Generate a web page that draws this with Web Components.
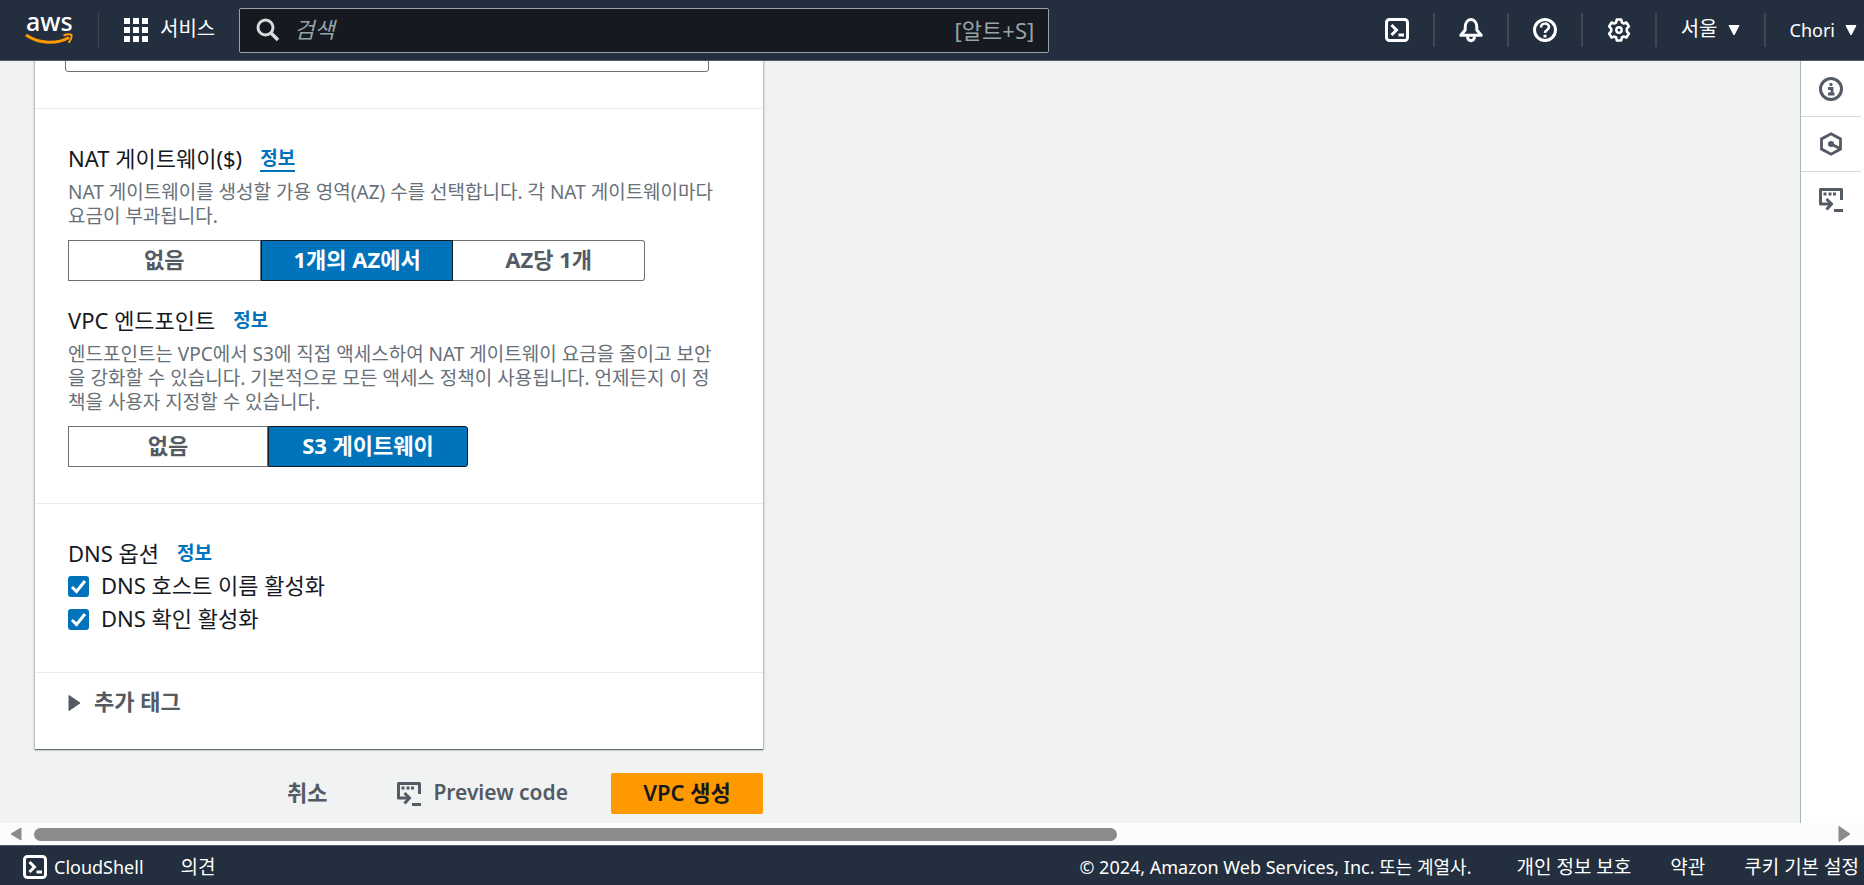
<!DOCTYPE html>
<html lang="ko">
<head>
<meta charset="utf-8">
<title>VPC 생성</title>
<style>
  body {
    margin: 0;
    font-family: 'Noto Sans', 'Noto Sans CJK KR', sans-serif;
    font-size: 22px;
    line-height: 24px;
    color: #16191f;
    background: #f1f3f3;
  }
</style>
</head>
<body>
<vpc-app></vpc-app>

<script>
const BASE = `
  * { box-sizing: border-box; }
  button, input { font: inherit; color: inherit; margin: 0; }
  button { background: none; border: 0; padding: 0; cursor: pointer; }
  a { color: inherit; text-decoration: none; }
`;

const ICONS = {
  shell: '<rect x="1.5" y="1.5" width="21" height="21" rx="3"/><path d="M6.500 7l5 5-5 5M13.500 17h5.500"/>',
  bell: '<path d="M1.800 17.300h20.400L17.800 12V9.500C17.800 5 15.500 1.500 12 1.500S6.200 5 6.200 9.500V12z" stroke-linejoin="round"/><path d="M8.500 18.500c0 5.500 7 5.500 7 0"/>',
  help: '<circle cx="12" cy="12" r="10.500"/><path d="M8 9.500c0-5.200 8-5 8-.4 0 2.900-4 2.700-4 6" stroke-width="2.500"/><path d="M12 16.800v2.700"/>',
  gear: '<path d="M9.800 1.500h4.400l.7 3 1.600.9 2.900-.9 2.500 3.900-2.100 2.300v2.600l2.100 2.300-2.500 3.900-2.900-.9-1.600.9-.7 3H9.800l-.7-3-1.600-.9-2.900.9-2.500-3.900 2.100-2.300v-2.600L2.100 8.400l2.500-3.900 2.900.9 1.600-.9z" stroke-linejoin="round" stroke-width="2.600"/><circle cx="12" cy="12" r="2.700" stroke-width="2.400"/>',
  info: '<circle cx="12" cy="12" r="10.500"/><path d="M12 6v3M9 11.500h4v5.500M9 17h6.500" stroke-width="2.800"/>',
  hexagon: '<path d="M12 1.800l9.500 5.100v10.200L12 22.200l-9.500-5.100V6.900z" stroke-width="2.800"/><circle cx="12" cy="12" r="3" fill="currentColor" stroke="none"/><path d="M12 12l9 4.500"/>',
  code: '<path d="M22.500 12V1.500h-21v14.500h10" stroke-linejoin="round"/><path d="M7.500 11l5 5-5 5.500M15 22.500h9"/><path d="M4.500 6h3M9.500 6h3M14 6h3" stroke-width="3"/>',
  search: '<circle cx="9.500" cy="9.500" r="7.500"/><path d="M15 15l7 7" stroke-width="3.500"/>',
  grid: '<path stroke="none" fill="currentColor" d="M0 0h6v6H0zM9 0h6v6H9zM18 0h6v6h-6zM0 9h6v6H0zM9 9h6v6H9zM18 9h6v6h-6zM0 18h6v6H0zM9 18h6v6H9zM18 18h6v6h-6z"/>',
  down: '<path d="M1 1.500h10L6 11z" fill="currentColor" stroke-width="1" stroke-linejoin="round"/>',
  right: '<path d="M1 .500v15l11-7.500z" fill="currentColor" stroke-width="1" stroke-linejoin="round"/>',
  left: '<path d="M11 1v12L1 7z" fill="currentColor" stroke-width="1" stroke-linejoin="round"/>',
};

function define(name, css, html) {
  customElements.define(name, class extends HTMLElement {
    constructor() {
      super();
      this.attachShadow({ mode: 'open' });
    }

    connectedCallback() {
      const markup = typeof html === 'function' ? html(this) : html;
      this.shadowRoot.innerHTML = `<style>${BASE}${css}</style>${markup}`;
    }
  });
}

define('ui-icon', `
  :host { display: block; flex: none; }
  svg { display: block; fill: none; stroke: currentColor; stroke-width: 3; overflow: visible; }
`, (el) => {
  const w = el.getAttribute('width') || 24;
  const h = el.getAttribute('height') || w;
  return `<svg width="${w}" height="${h}" viewBox="0 0 ${w} ${h}" aria-hidden="true">${ICONS[el.getAttribute('name')]}</svg>`;
});

define('aws-logo', `
  :host { display: block; }
  svg { display: block; overflow: visible; }
  text { font: 500 25px 'Noto Sans', sans-serif; fill: #fff; }
`, `
  <svg width="50" height="54" viewBox="0 -10 50 54" role="img" aria-label="aws">
    <text x="1" y="18">aws</text>
    <path d="M1 22c13 9 31 9.500 43 2.500" fill="none" stroke="#f90" stroke-width="3"/>
    <path d="M38.500 22.500c3-1.500 6-1.500 8-.8.300 3-1 6-3 8" fill="none" stroke="#f90" stroke-width="2"/>
  </svg>
`);

define('top-nav', `
  :host {
    display: flex;
    align-items: center;
    height: 61px;
    flex: none;
    background: #232f3e;
    border-bottom: 1px solid #545b64;
    color: #fff;
    font-size: 20px;
  }
  a, button { display: flex; align-items: center; }
  .logo { padding: 0 23px 0 25px; }
  .line { width: 2px; height: 34px; background: #414750; }
  .line.thin { width: 1px; }
  .services { gap: 12px; padding: 0 24px 0 25px; white-space: nowrap; }
  .services span { padding-bottom: 2px; }
  .search {
    display: flex;
    align-items: center;
    width: 810px;
    height: 45px;
    padding: 0 14px 0 16px;
    border: 1px solid #95a5a6;
    border-radius: 2px;
    background: #16191f;
    color: #d5dbdb;
    font-size: 22px;
  }
  .search input {
    flex: 1;
    min-width: 0;
    margin-left: 14px;
    padding: 0 0 2px;
    border: 0;
    background: none;
  }
  .search input::placeholder { color: #95a5a6; font-style: italic; opacity: 1; }
  .search span { color: #95a5a6; }
  .tools { display: flex; align-items: center; margin-left: auto; }
  .tools button { gap: 10px; padding: 0 24px; white-space: nowrap; }
  .tools button span { padding-bottom: 2px; }
  .tools button.user { padding-right: 7px; font-size: 18px; }
`, `
  <a class="logo" href="#" aria-label="AWS"><aws-logo></aws-logo></a>
  <div class="line thin"></div>
  <button class="services"><ui-icon name="grid"></ui-icon><span>서비스</span></button>
  <label class="search">
    <ui-icon name="search"></ui-icon>
    <input type="search" placeholder="검색" aria-label="검색">
    <span>[알트+S]</span>
  </label>
  <div class="tools">
    <button aria-label="CloudShell"><ui-icon name="shell"></ui-icon></button>
    <div class="line"></div>
    <button aria-label="알림"><ui-icon name="bell"></ui-icon></button>
    <div class="line"></div>
    <button aria-label="지원"><ui-icon name="help"></ui-icon></button>
    <div class="line"></div>
    <button aria-label="설정"><ui-icon name="gear"></ui-icon></button>
    <div class="line"></div>
    <button><span>서울</span><ui-icon name="down" width="12"></ui-icon></button>
    <div class="line"></div>
    <button class="user">Chori<ui-icon name="down" width="12"></ui-icon></button>
  </div>
`);

define('form-field', `
  :host { display: block; }
  .head { display: flex; align-items: center; gap: 18px; }
  .head span { padding-bottom: 2px; }
  .head a { color: #0073bb; font-size: 19px; font-weight: 700; border-bottom: 2px solid transparent; }
  :host([active]) .head a { border-color: #0073bb; }
  :host([plain]) .head { margin-bottom: 3px; }
  p { margin: 8px 0 12px; color: #687078; font-size: 19px; white-space: nowrap; }
`, (el) => `
  <div class="head"><span>${el.getAttribute('label')}</span><a href="#">정보</a></div>
  ${el.hasAttribute('plain') ? '' : '<p><slot name="description"></slot></p>'}
  <slot></slot>
`);

define('segmented-control', `
  :host { display: flex; width: var(--segments-width); }
  button {
    flex: 1;
    height: 41px;
    padding-bottom: 4px;
    border: 1px solid #687078;
    background: #fff;
    color: #545b64;
    font-weight: 700;
    white-space: nowrap;
  }
  button + button { border-left: 0; }
  button:first-child { border-radius: 3px 0 0 3px; border-right: 0; }
  button:last-child { border-radius: 0 3px 3px 0; }
  button.selected, button.selected:last-child { background: #0073bb; border: 1px solid #16191f; color: #fff; }
`, (el) => {
  const selected = Number(el.getAttribute('selected'));
  return el.getAttribute('options').split('|').map((text, i) =>
    `<button aria-pressed="${i === selected}"${i === selected ? ' class="selected"' : ''}>${text}</button>`
  ).join('');
});

define('check-field', `
  :host { display: block; }
  label { display: flex; align-items: center; gap: 12px; height: 33px; }
  span { padding-bottom: 4px; }
  input {
    appearance: none;
    width: 21px;
    height: 21px;
    border-radius: 3px;
    background: #fff;
    border: 1px solid #687078;
  }
  input:checked {
    border: 0;
    background: #0073bb url("data:image/svg+xml,%3Csvg xmlns='http://www.w3.org/2000/svg' viewBox='0 0 21 21'%3E%3Cpath d='M4 11l4.500 4.500L17 5' fill='none' stroke='white' stroke-width='3'/%3E%3C/svg%3E");
  }
`, `<label><input type="checkbox" checked><span><slot></slot></span></label>`);

define('form-card', `
  :host {
    display: block;
    background: #fff;
    box-shadow: 0 1px 1px 0 #687078, 0 0 2px 1px #b8c1c1;
  }
`, '<slot></slot>');

define('form-section', `
  :host { display: flex; flex-direction: column; gap: 27px; padding: 37px 33px 36px; border-bottom: 1px solid #eaeded; }
  :host([kind="input"]) { padding: 30px 54px 36px 30px; }
  :host([kind="tags"]) { padding: 18px 33px 34px; border-bottom: 0; }
  ::slotted(input) {
    width: 100%;
    height: 42px;
    border: 1px solid #687078;
    border-radius: 3px;
  }
`, '<slot></slot>');

define('expand-toggle', `
  :host { display: block; }
  button { display: flex; align-items: center; gap: 12px; height: 24px; color: #545b64; font-weight: 600; }
  span { padding-bottom: 4px; }
`, '<button aria-expanded="false"><ui-icon name="right" width="14" height="16"></ui-icon><span><slot></slot></span></button>');

define('form-actions', `
  :host { display: flex; justify-content: flex-end; font-weight: 600; color: #545b64; }
  button { display: flex; align-items: center; gap: 12px; height: 41px; white-space: nowrap; }
  span { padding-bottom: 4px; }
  .cancel { padding-right: 35px; }
  .preview { padding: 0 43px 0 35px; font-size: 21px; }
  .create { justify-content: center; width: 152px; border-radius: 2px; background: #f90; color: #16191f; }
`, `
  <button class="cancel"><span>취소</span></button>
  <button class="preview"><ui-icon name="code"></ui-icon><span>Preview code</span></button>
  <button class="create"><span>VPC 생성</span></button>
`);

define('side-rail', `
  :host {
    display: flex;
    flex-direction: column;
    flex: none;
    width: 64px;
    padding: 1px 3px 0 0;
    background: #fff;
    border-left: 1px solid #aab7b8;
    color: #545b64;
  }
  button { display: grid; place-items: center; height: 55px; border-bottom: 1px solid #d5dbdb; }
  button:last-child { border-bottom: 0; }
`, `
  <button aria-label="정보"><ui-icon name="info"></ui-icon></button>
  <button aria-label="자습서"><ui-icon name="hexagon"></ui-icon></button>
  <button aria-label="코드"><ui-icon name="code"></ui-icon></button>
`);

define('h-scrollbar', `
  :host {
    display: flex;
    align-items: center;
    flex: none;
    gap: 12px;
    height: 22px;
    padding: 0 14px 0 10px;
    background: #fcfcfc;
    color: #8b8b8b;
  }
  .track { flex: 1; }
  .thumb { width: calc(60% + 8px); height: 13px; border-radius: 7px; background: #8b8b8b; }
`, `
  <ui-icon name="left" width="12" height="14"></ui-icon>
  <div class="track"><div class="thumb"></div></div>
  <ui-icon name="right" width="12" height="16"></ui-icon>
`);

define('page-footer', `
  :host {
    display: flex;
    align-items: center;
    flex: none;
    height: 40px;
    padding: 2px 5px 0 23px;
    border-top: 1px solid #545b64;
    background: #232f3e;
    color: #fff;
    font-size: 19px;
    white-space: nowrap;
  }
  button { display: flex; align-items: center; gap: 7px; font-size: 18px; }
  .feedback { margin-left: 37px; }
  .legal { display: flex; gap: 39px; margin-left: auto; }
  .legal span { margin-right: 6px; font-size: 18px; }
`, `
  <button><ui-icon name="shell"></ui-icon>CloudShell</button>
  <a class="feedback" href="#">의견</a>
  <div class="legal">
    <span>© 2024, Amazon Web Services, Inc. 또는 계열사.</span>
    <a href="#">개인 정보 보호</a>
    <a href="#">약관</a>
    <a href="#">쿠키 기본 설정</a>
  </div>
`);

define('vpc-app', `
  :host { display: flex; flex-direction: column; height: 100vh; }
  .body { display: flex; flex: 1; min-height: 0; }
  /* the form is shown scrolled to its end */
  main {
    display: flex;
    flex-direction: column;
    justify-content: flex-end;
    flex: 1;
    min-width: 0;
    overflow: hidden;
    padding: 0 0 9px 35px;
  }
  .form { display: flex; flex-direction: column; gap: 24px; width: 728px; }
  .nat { --segments-width: 577px; }
  .endpoint { --segments-width: 400px; }
`, `
  <top-nav></top-nav>
  <div class="body">
    <main>
      <div class="form">
        <form-card>
          <form-section kind="input"><input type="text" aria-label="CIDR 블록"></form-section>
          <form-section>
            <form-field class="nat" label="NAT 게이트웨이($)" active>
              <span slot="description">NAT 게이트웨이를 생성할 가용 영역(AZ) 수를 선택합니다. 각 NAT 게이트웨이마다<br>요금이 부과됩니다.</span>
              <segmented-control options="없음|1개의 AZ에서|AZ당 1개" selected="1"></segmented-control>
            </form-field>
            <form-field class="endpoint" label="VPC 엔드포인트">
              <span slot="description">엔드포인트는 VPC에서 S3에 직접 액세스하여 NAT 게이트웨이 요금을 줄이고 보안<br>을 강화할 수 있습니다. 기본적으로 모든 액세스 정책이 사용됩니다. 언제든지 이 정<br>책을 사용자 지정할 수 있습니다.</span>
              <segmented-control options="없음|S3 게이트웨이" selected="1"></segmented-control>
            </form-field>
          </form-section>
          <form-section>
            <form-field label="DNS 옵션" plain>
              <check-field>DNS 호스트 이름 활성화</check-field>
              <check-field>DNS 확인 활성화</check-field>
            </form-field>
          </form-section>
          <form-section kind="tags">
            <expand-toggle>추가 태그</expand-toggle>
          </form-section>
        </form-card>
        <form-actions></form-actions>
      </div>
    </main>
    <side-rail></side-rail>
  </div>
  <h-scrollbar></h-scrollbar>
  <page-footer></page-footer>
`);
</script>
</body>
</html>
